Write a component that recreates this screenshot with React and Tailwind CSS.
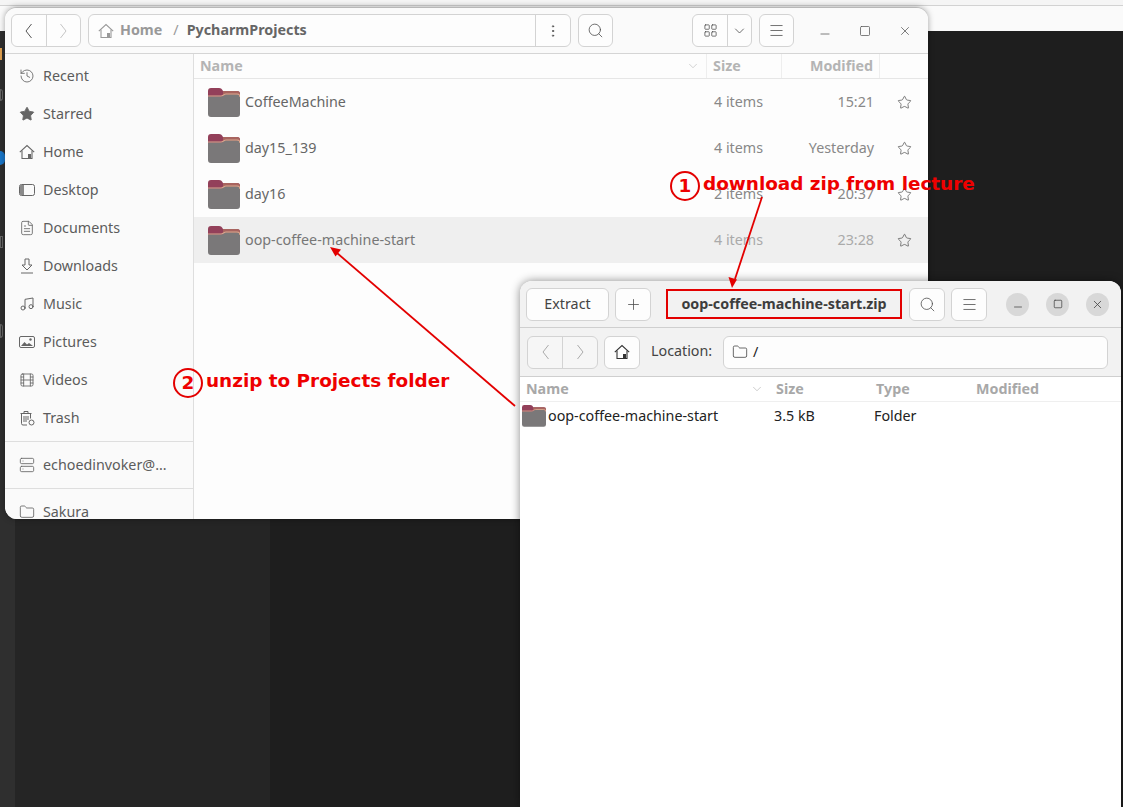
import React from 'react';
import {
  ChevronDown, Search, Menu, X, Minus, Square, Plus, Star,
  History, FileText, Music, Film, Server, Folder, EllipsisVertical, LayoutGrid,
} from 'lucide-react';

function FolderIcon({ className }) {
  return (
    <svg viewBox="0 0 32 30" className={className}>
      <path d="M0 4a3 3 0 0 1 3-3h8c2 0 3 1 4 3h14a3 3 0 0 1 3 3v6H0z" fill="#93405a" />
      <path d="M15 4h14a3 3 0 0 1 3 3v3H15z" fill="#a8645f" />
      <path d="M0 9.5h13c2 0 3-2 5-2h11a3 3 0 0 1 3 3V27a3 3 0 0 1-3 3H3a3 3 0 0 1-3-3z" fill="#7a7879" />
      <path d="M0 9h13c2 0 3-2 5-2h11a3 3 0 0 1 3 3" fill="none" stroke="#d8a78f" strokeWidth="1.2" />
    </svg>
  );
}

// tall thin chevrons of the GNOME header bars
function NavChevron({ dir, className }) {
  return (
    <svg viewBox="0 0 9 16" className={`w-[9px] h-[16px] ${className}`} fill="none" stroke="currentColor" strokeWidth="1">
      <path d={dir === 'left' ? 'M7.5 1L2 8l5.5 7' : 'M1.5 1L7 8l-5.5 7'} />
    </svg>
  );
}

function HomeIcon({ className }) {
  return (
    <svg viewBox="0 0 16 16" className={className} fill="none" stroke="currentColor" strokeWidth="1.1">
      <path d="M0.8 8.2L8 1.5l7.2 6.7" />
      <path d="M3 6.5v8h10v-8" />
      <rect x="9" y="10" width="3" height="4.5" fill="currentColor" stroke="none" />
    </svg>
  );
}

function DesktopIcon() {
  return (
    <svg viewBox="0 0 16 16" className="w-4 h-4" fill="none">
      <rect x="0.5" y="2.5" width="15" height="11" rx="2" stroke="#666" />
      <path d="M2 3h3v10H2a1 1 0 0 1-1-1V4a1 1 0 0 1 1-1z" fill="#8a8a8a" />
    </svg>
  );
}

function DownloadsIcon() {
  return (
    <svg viewBox="0 0 16 16" className="w-4 h-4" fill="none" stroke="#666" strokeWidth="1">
      <path d="M6 1h4v6h3l-5 5-5-5h3z" />
      <path d="M2 15h12" />
    </svg>
  );
}

function PicturesIcon() {
  return (
    <svg viewBox="0 0 16 16" className="w-4 h-4" fill="none">
      <rect x="0.5" y="2.5" width="15" height="11" rx="1.5" stroke="#666" />
      <path d="M2 12l3.5-4 2.5 2.5 2-1.5 4 3z" fill="#666" />
      <circle cx="11.5" cy="5.5" r="1.2" fill="#666" />
    </svg>
  );
}

function TrashIcon() {
  return (
    <svg viewBox="0 0 16 16" className="w-4 h-4" fill="none" stroke="#666" strokeWidth="1">
      <path d="M1.5 3.5h11M5 3.5V1.5h4v2" />
      <path d="M2.5 3.5v10a1.5 1.5 0 0 0 1.5 1.5h4M11.5 3.5v5" />
      <path d="M5 6v6M7 6v6M9 6v4" />
      <circle cx="12.5" cy="12.5" r="2.5" />
    </svg>
  );
}

const sideIcon = 'w-4 h-4 text-[#666]';
const places = [
  ['Recent', <History key="r" className={sideIcon} strokeWidth={1.3} />],
  ['Starred', <Star key="s" className={sideIcon} fill="#666" strokeWidth={1.3} />],
  ['Home', <HomeIcon key="h" className={sideIcon} />],
  ['Desktop', <DesktopIcon key="d" />],
  ['Documents', <FileText key="do" className={sideIcon} strokeWidth={1.3} />],
  ['Downloads', <DownloadsIcon key="dl" />],
  ['Music', <Music key="m" className={sideIcon} strokeWidth={1.5} />],
  ['Pictures', <PicturesIcon key="p" />],
  ['Videos', <Film key="v" className={sideIcon} strokeWidth={1.3} />],
  ['Trash', <TrashIcon key="t" />],
];

const files = [
  { name: 'CoffeeMachine', size: '4 items', modified: '15:21' },
  { name: 'day15_139', size: '4 items', modified: 'Yesterday' },
  { name: 'day16', size: '2 items', modified: '20:37' },
  { name: 'oop-coffee-machine-start', size: '4 items', modified: '23:28', selected: true },
];

const btn = 'flex items-center justify-center border border-[#d3d3d3] rounded-[6px] bg-[#fdfdfd] text-[#4a4a4a]';

function FilesWindow() {
  return (
    <div className="absolute left-[5px] top-[7px] w-[923px] h-[512px] flex flex-col bg-[#fdfdfd] rounded-t-[12px] rounded-bl-[12px] overflow-hidden border-t border-[#b8b8b8] shadow-[0_0_6px_rgba(0,0,0,0.35)]">
      <div className="h-[46px] shrink-0 flex items-center pl-[6px] border-b border-[#d5d5d5] bg-[#fafafa]">
        <div className={`${btn} w-[70px] h-[33px]`}>
          <div className="flex-1 h-full flex items-center justify-center border-r border-[#d3d3d3]">
            <NavChevron dir="left" className="text-[#555]" />
          </div>
          <div className="flex-1 flex items-center justify-center">
            <NavChevron dir="right" className="text-[#c4c4c4]" />
          </div>
        </div>
        <div className={`${btn} ml-[7px] w-[483px] h-[33px] !justify-start pl-[9px]`}>
          <HomeIcon className="w-4 h-4 text-[#999]" />
          <span className="ml-[6px] font-bold text-[#999] -translate-y-px">Home</span>
          <span className="ml-[11px] text-[#999] -translate-y-px">/</span>
          <span className="ml-[8px] font-bold text-[#666] -translate-y-px">PycharmProjects</span>
          <div className="ml-auto w-[35px] h-full flex items-center justify-center border-l border-[#d3d3d3]">
            <EllipsisVertical className="w-4 h-4 text-[#555]" strokeWidth={1.5} />
          </div>
        </div>
        <div className={`${btn} ml-[7px] w-[35px] h-[33px]`}>
          <Search className="w-[17px] h-[17px]" strokeWidth={1.1} />
        </div>
        <div className={`${btn} ml-[79px] w-[60px] h-[33px]`}>
          <div className="w-[35px] h-full flex items-center justify-center border-r border-[#d3d3d3]">
            <LayoutGrid className="w-[15px] h-[15px]" strokeWidth={1.2} />
          </div>
          <ChevronDown className="flex-1 w-4 h-4" strokeWidth={1.2} />
        </div>
        <div className={`${btn} ml-[7px] w-[35px] h-[33px]`}>
          <Menu className="w-[17px] h-[17px]" strokeWidth={1.1} />
        </div>
        <div className="ml-[11px] flex text-[#555]">
          <div className="w-[40px] flex justify-center"><Minus className="w-[14px] h-[14px] translate-y-[3px]" strokeWidth={1.3} /></div>
          <div className="w-[40px] flex justify-center"><Square className="w-[12px] h-[12px] mt-[1px]" strokeWidth={1.5} /></div>
          <div className="w-[40px] flex justify-center"><X className="w-[14px] h-[14px]" strokeWidth={1.3} /></div>
        </div>
      </div>
      <div className="flex-1 flex min-h-0">
        <aside className="w-[189px] shrink-0 pt-[3px] border-r border-[#dedede] bg-[#fafafa] text-[#5c5c5c] overflow-hidden">
          {places.map(([label, icon]) => (
            <div key={label} className="h-[38px] flex items-center pl-[14px] gap-[8px]">
              <span className="w-4 flex justify-center">{icon}</span>
              <span>{label}</span>
            </div>
          ))}
          <div className="mt-[4px] border-t border-[#dedede] h-[47px] flex items-center pl-[14px] gap-[8px]">
            <Server className={sideIcon} strokeWidth={1.3} />
            <span>echoedinvoker@…</span>
          </div>
          <div className="border-t border-[#dedede] h-[46px] flex items-center pl-[14px] gap-[8px]">
            <Folder className={sideIcon} strokeWidth={1.3} />
            <span>Sakura</span>
          </div>
        </aside>
        <main className="flex-1 min-w-0">
          <div className="h-[25px] flex items-center border-b border-[#e6e6e6] font-bold text-[#b4b4b4]">
            <div className="w-[513px] h-full flex items-center justify-between pl-[6px] pr-[6px] border-r border-[#eeeeee]">
              <span>Name</span>
              <ChevronDown className="w-[14px] h-[14px]" strokeWidth={1} />
            </div>
            <div className="w-[75px] h-full flex items-center pl-[6px] border-r border-[#eeeeee]">Size</div>
            <div className="w-[98px] h-full flex items-center justify-end pr-[6px] border-r border-[#eeeeee]">Modified</div>
          </div>
          {files.map((f) => (
            <div key={f.name} className={`h-[46px] flex items-center ${f.selected ? 'bg-[#efefef]' : ''}`}>
              <div className="w-[513px] flex items-center pl-[14px] gap-[5px]">
                <FolderIcon className="w-[32px] h-[30px]" />
                <span className={f.selected ? 'text-[#777]' : 'text-[#666]'}>{f.name}</span>
              </div>
              <div className={`w-[75px] pl-[7px] ${f.selected ? 'text-[#aaa]' : 'text-[#888]'}`}>{f.size}</div>
              <div className={`w-[98px] text-right pr-[6px] ${f.selected ? 'text-[#aaa]' : 'text-[#888]'}`}>{f.modified}</div>
              <div className="flex-1 flex justify-center">
                <Star className="w-[15px] h-[15px] text-[#555]" strokeWidth={1.2} />
              </div>
            </div>
          ))}
        </main>
      </div>
    </div>
  );
}

function ArchiveWindow() {
  return (
    <div className="absolute left-[520px] top-[281px] w-[601px] h-[526px] flex flex-col bg-white rounded-t-[12px] overflow-hidden shadow-[0_0_10px_rgba(0,0,0,0.45)]">
      <div className="h-[47px] shrink-0 flex items-center pl-[6px] bg-[#f2f2f2] border-b border-[#cfcfcf]">
        <div className={`${btn} w-[83px] h-[33px] text-[#444]`}>Extract</div>
        <div className={`${btn} ml-[6px] w-[36px] h-[33px]`}>
          <Plus className="w-[17px] h-[17px]" strokeWidth={1.1} />
        </div>
        <div className="ml-[15px] w-[236px] h-[30px] flex items-center justify-center border-2 border-[#e30000] font-bold text-[#3d3d3d]">
          oop-coffee-machine-start.zip
        </div>
        <div className={`${btn} ml-[7px] w-[36px] h-[33px]`}>
          <Search className="w-[17px] h-[17px]" strokeWidth={1.1} />
        </div>
        <div className={`${btn} ml-[6px] w-[36px] h-[33px]`}>
          <Menu className="w-[17px] h-[17px]" strokeWidth={1.1} />
        </div>
        <div className="ml-[19px] flex gap-[17px] text-[#444]">
          <div className="w-[23px] h-[23px] rounded-full bg-[#d8d8d8] flex items-center justify-center"><Minus className="w-[12px] h-[12px] translate-y-[3px]" strokeWidth={1.5} /></div>
          <div className="w-[23px] h-[23px] rounded-full bg-[#d8d8d8] flex items-center justify-center"><Square className="w-[10px] h-[10px]" strokeWidth={1.8} /></div>
          <div className="w-[23px] h-[23px] rounded-full bg-[#d8d8d8] flex items-center justify-center"><X className="w-[13px] h-[13px]" strokeWidth={1.5} /></div>
        </div>
      </div>
      <div className="h-[49px] shrink-0 flex items-center pl-[7px] bg-[#f2f2f2] border-b border-[#cfcfcf]">
        <div className={`${btn} w-[71px] h-[33px] !bg-[#f6f6f6]`}>
          <div className="flex-1 h-full flex items-center justify-center border-r border-[#d3d3d3]">
            <NavChevron dir="left" className="text-[#aaa]" />
          </div>
          <div className="flex-1 flex items-center justify-center">
            <NavChevron dir="right" className="text-[#aaa]" />
          </div>
        </div>
        <div className={`${btn} ml-[6px] w-[36px] h-[33px]`}>
          <HomeIcon className="w-4 h-4 text-[#333]" />
        </div>
        <span className="ml-[11px] w-[72px] text-[#444] -translate-y-px">Location:</span>
        <div className={`${btn} w-[385px] h-[33px] !justify-start pl-[8px] gap-[5px]`}>
          <Folder className="w-4 h-4 text-[#444]" strokeWidth={1.2} />
          <span className="text-[#222]">/</span>
        </div>
      </div>
      <div className="h-[25px] shrink-0 flex items-center border-b border-[#efefef] font-bold text-[#a8a8a8]">
        <div className="w-[250px] flex items-center justify-between pl-[6px] pr-[6px]">
          <span>Name</span>
          <ChevronDown className="w-[14px] h-[14px]" strokeWidth={1} />
        </div>
        <div className="w-[100px] pl-[6px]">Size</div>
        <div className="w-[100px] pl-[6px]">Type</div>
        <div className="pl-[6px]">Modified</div>
      </div>
      <div className="h-[27px] flex items-center text-[#222]">
        <div className="w-[250px] flex items-center pl-[2px] gap-[2px]">
          <FolderIcon className="w-[24px] h-[23px]" />
          <span>oop-coffee-machine-start</span>
        </div>
        <div className="w-[100px] pl-[4px]">3.5 kB</div>
        <div className="pl-[4px]">Folder</div>
      </div>
    </div>
  );
}

function Annotation({ className, digit, label }) {
  return (
    <div className={`absolute flex items-center gap-[3px] font-['DejaVu_Sans',sans-serif] font-bold text-[18.4px] leading-none text-[#ee0000] ${className}`}>
      <span className="w-[30px] h-[30px] flex items-center justify-center rounded-full border-2 border-[#e30000]">{digit}</span>
      <span className="whitespace-nowrap -translate-y-[2px]">{label}</span>
    </div>
  );
}

export default function App() {
  return (
    <div className="relative w-[1123px] h-[807px] overflow-hidden flex flex-col bg-[#1e1e1e] font-['Noto_Sans',sans-serif] text-[14.3px]">
      {/* desktop behind the windows */}
      <div className="h-[31px] shrink-0 bg-[#fafafa]">
        <div className="h-[6px] bg-[#f5f5f5] border-b border-[#d2d2d2]" />
      </div>
      <div className="flex-1 flex">
        <div className="w-[15px] bg-[#2f2f2f] relative">
          <div className="absolute left-0 top-[17px] w-[2px] h-[12px] bg-[#e0a050]" />
          <div className="absolute left-0 top-[58px] w-[3px] h-[12px] rounded-r-full border border-[#666]" />
          <div className="absolute left-0 top-[120px] w-[5px] h-[14px] rounded-r-full bg-[#1976c8]" />
          <div className="absolute left-0 top-[205px] w-[3px] h-[12px] border border-[#666]" />
          <div className="absolute left-0 top-[293px] w-[3px] h-[14px] rounded-r-full border border-[#666]" />
        </div>
        <div className="w-[255px] bg-[#252525]" />
        <div className="flex-1 bg-[#1e1e1e]" />
      </div>

      <FilesWindow />
      <ArchiveWindow />

      <svg className="absolute inset-0 w-[1123px] h-[807px] pointer-events-none" viewBox="0 0 1123 807" fill="none">
        <path d="M762 197L735 279" stroke="#e30000" strokeWidth="1.8" />
        <path d="M732 288l-3.5-11 8.5 2.5z" fill="#e30000" />
        <path d="M515 406L337 253" stroke="#e30000" strokeWidth="1.8" />
        <path d="M330 247l11 2.5-5.5 7z" fill="#e30000" />
      </svg>
      <Annotation className="left-[670px] top-[171px]" digit="1" label="download zip from lecture" />
      <Annotation className="left-[173px] top-[368px]" digit="2" label="unzip to Projects folder" />
    </div>
  );
}
